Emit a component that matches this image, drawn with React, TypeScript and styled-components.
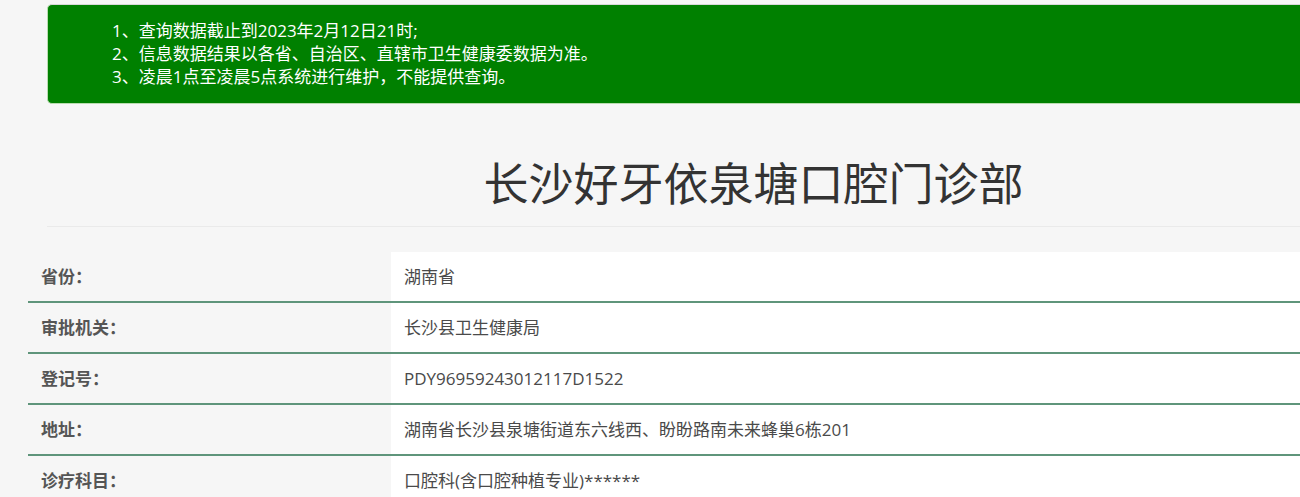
import React from "react";
import styled, { createGlobalStyle } from "styled-components";

const GlobalStyle = createGlobalStyle`
  html, body {
    margin: 0;
    padding: 0;
    background: #f6f6f6;
    overflow: hidden;
  }
  body {
    font-family: "Open Sans", "Noto Sans CJK SC", sans-serif;
    color: #333;
  }
`;

const Container = styled.div`
  margin-left: 28px;
  width: 1451px;
  padding: 4px 19px 0;
  box-sizing: border-box;
`;

const Notice = styled.div`
  background: #008000;
  border: 1px solid #b9dcb0;
  border-top-color: #d8d8d8;
  border-radius: 5px;
  padding: 14px 0 15px 64px;
  color: #fff;
  font-size: 17px;
  line-height: 23px;
`;

const NoticeLine = styled.div``;

const Title = styled.h1`
  margin: 52px 0 0;
  padding-bottom: 14px;
  text-align: center;
  font-size: 45px;
  line-height: 56px;
  font-weight: 400;
  color: #333;
  border-bottom: 1px solid #eaeaea;
`;

const Table = styled.table`
  margin: 25px -19px 0;
  width: 1462px;
  border-collapse: collapse;
  font-size: 17px;
  line-height: 25px;
`;

const Row = styled.tr`
  border-bottom: 2px solid #5f957b;
`;

const Label = styled.td`
  width: 337px;
  padding: 12px 13px;
  font-weight: 700;
  color: #555;
  background: transparent;
`;

const Value = styled.td`
  padding: 12px 13px;
  color: #4a4a4a;
  background: #fff;
`;

const notices = [
  "1、查询数据截止到2023年2月12日21时;",
  "2、信息数据结果以各省、自治区、直辖市卫生健康委数据为准。",
  "3、凌晨1点至凌晨5点系统进行维护，不能提供查询。",
];

const rows: [string, string][] = [
  ["省份：", "湖南省"],
  ["审批机关：", "长沙县卫生健康局"],
  ["登记号：", "PDY96959243012117D1522"],
  ["地址：", "湖南省长沙县泉塘街道东六线西、盼盼路南未来蜂巢6栋201"],
  ["诊疗科目：", "口腔科(含口腔种植专业)******"],
];

export default function App() {
  return (
    <>
      <GlobalStyle />
      <Container>
        <Notice>
          {notices.map((n) => (
            <NoticeLine key={n}>{n}</NoticeLine>
          ))}
        </Notice>
        <Title>长沙好牙依泉塘口腔门诊部</Title>
        <Table>
          <tbody>
            {rows.map(([k, v]) => (
              <Row key={k}>
                <Label>{k}</Label>
                <Value>{v}</Value>
              </Row>
            ))}
          </tbody>
        </Table>
      </Container>
    </>
  );
}
